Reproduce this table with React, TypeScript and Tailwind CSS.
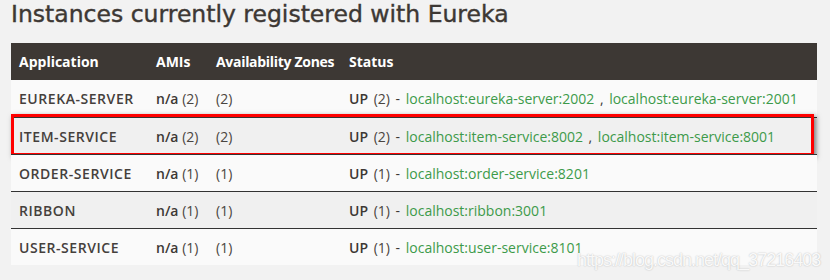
import React from "react";

type Row = {
  name: string;
  amis: string;
  zones: string;
  count: string;
  links: string[];
  bg: string;
  highlight?: boolean;
};

const rows: Row[] = [
  { name: "EUREKA-SERVER", amis: "(2)", zones: "(2)", count: "(2)", links: ["localhost:eureka-server:2002", "localhost:eureka-server:2001"], bg: "bg-[#fafafa]" },
  { name: "ITEM-SERVICE", amis: "(2)", zones: "(2)", count: "(2)", links: ["localhost:item-service:8002", "localhost:item-service:8001"], bg: "bg-[#f0f0f0]", highlight: true },
  { name: "ORDER-SERVICE", amis: "(1)", zones: "(1)", count: "(1)", links: ["localhost:order-service:8201"], bg: "bg-[#fafafa]" },
  { name: "RIBBON", amis: "(1)", zones: "(1)", count: "(1)", links: ["localhost:ribbon:3001"], bg: "bg-[#f0f0f0]" },
  { name: "USER-SERVICE", amis: "(1)", zones: "(1)", count: "(1)", links: ["localhost:user-service:8101"], bg: "bg-[#fafafa]" },
];

export default function App() {
  return (
    <div
      className="relative w-[830px] h-[280px] overflow-hidden bg-[#f2f2f2] pl-[11px]"
      style={{ fontFamily: '"Open Sans", "DejaVu Sans", sans-serif' }}
    >
      <h1
        className="text-[23.5px] leading-[28px] text-[#3d3834] [-webkit-text-stroke:0.4px_#3d3834]"
        style={{ fontFamily: '"DejaVu Sans", sans-serif' }}
      >
        Instances currently registered with Eureka
      </h1>
      <div className="mt-[15px] w-[806px] text-[14px]">
        <div className="flex h-[37px] items-center bg-[#3d3834] text-white font-bold">
          <div className="w-[137px] pl-[8px]">Application</div>
          <div className="w-[60px] pl-[8px]">AMIs</div>
          <div className="w-[133px] pl-[8px] tracking-[-0.3px]">Availability Zones</div>
          <div className="flex-1 pl-[8px]">Status</div>
        </div>
        {rows.map((r, i) => (
          <div
            key={r.name}
            className={`relative flex h-[37px] items-center text-[#3d3834] ${r.bg} ${i > 0 ? "border-t border-[#333]" : ""}`}
          >
            <div className="w-[137px] pl-[8px] font-semibold tracking-[0.55px] text-[#45403c]">{r.name}</div>
            <div className="w-[60px] pl-[8px]">
              <span className="font-semibold">n/a</span> <span className="text-[#4a4540]">{r.amis}</span>
            </div>
            <div className="w-[133px] pl-[8px] text-[#4a4540]">{r.zones}</div>
            <div className="flex-1 pl-[8px] [word-spacing:2px]">
              <span className="font-semibold">UP</span> <span className="text-[#4a4540]">{r.count}</span> -{" "}
              {r.links.map((l, j) => (
                <React.Fragment key={l}>
                  {j > 0 && <span> , </span>}
                  <span className="text-[#3d9a4a]">{l}</span>
                </React.Fragment>
              ))}
            </div>
            {r.highlight && (
              <div className="absolute left-0 right-[3px] top-[-4px] bottom-[-2px] border-[3px] border-[#ff0000] shadow-[2px_2px_5px_rgba(0,0,0,0.5)]" />
            )}
          </div>
        ))}
      </div>
      <div
        className="absolute left-[577px] top-[249px] text-[18px] leading-[22px] tracking-[-1px] whitespace-nowrap text-white/90 [text-shadow:0_0_1.5px_rgba(0,0,0,0.3)]"
        style={{ fontFamily: '"Liberation Sans", Arial, sans-serif' }}
      >
        https://blog.csdn.net/qq_37216403
      </div>
    </div>
  );
}
